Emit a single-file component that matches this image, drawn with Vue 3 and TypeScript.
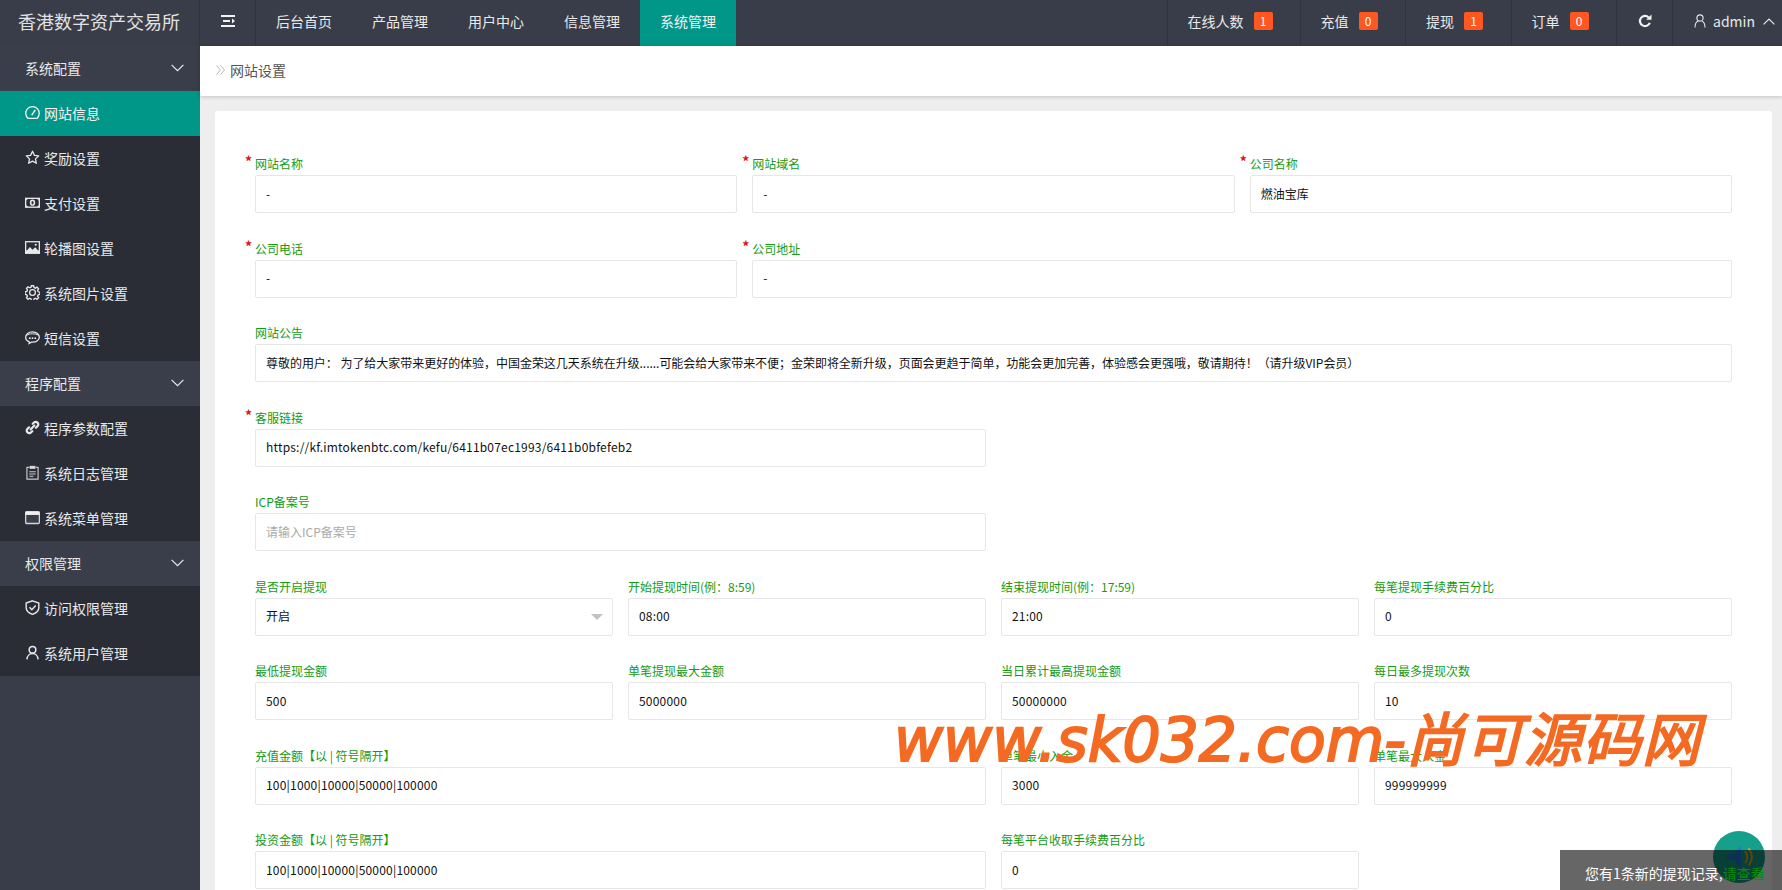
<script setup lang="ts">
interface Field { label: string; value?: string; placeholder?: string; span: number; req?: boolean; select?: boolean }

const navItems = ['后台首页', '产品管理', '用户中心', '信息管理', '系统管理']
const counters = [
  { label: '在线人数', n: 1 },
  { label: '充值', n: 0 },
  { label: '提现', n: 1 },
  { label: '订单', n: 0 },
]

const icons: Record<string, string> = {
  dash: '<path d="M2.900 12.500A6.300 6.300 0 1 1 11.100 12.500Z" fill="none" stroke="currentColor" stroke-width="1.200" stroke-linejoin="round"/><path d="M6.300 9.400 9.600 4.600" fill="none" stroke="currentColor" stroke-width="1.400"/>',
  star: '<path d="M7 1.200 8.800 5l4 .5-3 2.800.8 4.100L7 10.400l-3.600 2 .8-4.100-3-2.800 4-.5Z" fill="none" stroke="currentColor" stroke-width="1.200" stroke-linejoin="round"/>',
  money: '<rect x="0" y="2.500" width="14" height="9.500" fill="currentColor"/><rect x="1.200" y="3.700" width="11.600" height="7.100" rx="2" fill="#2a2d36"/><ellipse cx="7" cy="7.200" rx="2.500" ry="2.900" fill="currentColor"/><ellipse cx="7" cy="7.200" rx="1" ry="1.700" fill="#2a2d36"/>',
  image: '<rect x="0" y="1" width="14" height="12" fill="currentColor"/><rect x="1.200" y="2.200" width="11.600" height="7.600" fill="#2a2d36"/><path d="M1.200 10.500 4.600 6.500l2.400 2.600 2.600-2.400 3.200 3.800v1H1.200Z" fill="currentColor"/><circle cx="10" cy="4.400" r="1" fill="currentColor"/>',
  gear: '<path d="M5.900.8h2.200l.4 1.800 1.300.6 1.600-1 1.500 1.600-1 1.500.6 1.400 1.700.4v2.100l-1.700.4-.6 1.400 1 1.500-1.500 1.500-1.600-1-1.300.6-.4 1.800H5.900l-.4-1.800-1.300-.6-1.600 1-1.500-1.500 1-1.500-.6-1.400-1.700-.4V6.700l1.700-.4.6-1.400-1-1.500 1.500-1.600 1.600 1 1.300-.6Z" fill="none" stroke="currentColor" stroke-width="1.300" transform="translate(.3 -.1) scale(.96)"/><circle cx="7" cy="7" r="2.700" fill="none" stroke="currentColor" stroke-width="1.200"/>',
  chat: '<path d="M7 1.800C3.300 1.800.6 4 .6 6.800c0 2 1.400 3.600 3.400 4.300l-.2 1.500 2.200-1.300h1c3.700 0 6.400-2 6.400-4.500S10.700 1.800 7 1.800Z" fill="none" stroke="currentColor" stroke-width="1.200"/><path d="M1.200 5.200C3 3.800 5 3.600 7 3.600s4 .2 5.800 1.600" fill="none" stroke="currentColor" stroke-width=".9"/><circle cx="4.400" cy="7.600" r=".9" fill="currentColor"/><circle cx="7" cy="7.600" r=".9" fill="currentColor"/><circle cx="9.600" cy="7.600" r=".9" fill="currentColor"/>',
  link: '<g fill="none" stroke="currentColor" stroke-width="2" stroke-linecap="round"><path d="M5.200 8.800 8.800 5.200"/><path d="M7.200 3.600l1.500-1.500a2.400 2.400 0 0 1 3.300 3.300L10.200 7.200"/><path d="M6.800 10.400l-1.500 1.500A2.400 2.400 0 0 1 2 8.600L3.800 6.800"/></g>',
  note: '<path d="M4 2.200H1.800v11h10.400v-11H10" fill="none" stroke="#c9cacd" stroke-width="1.100"/><rect x="4.300" y=".8" width="5.400" height="2.800" fill="#d6d7d9"/><path d="M4 6.300h6M4 8.400h6M4 10.500h4" stroke="#c9cacd" stroke-width="1"/>',
  table: '<rect x=".6" y="1.600" width="12.800" height="11" rx="1" fill="#3b3f49" stroke="#d5d6d9" stroke-width="1.200"/><rect x=".6" y="1.600" width="12.800" height="3" fill="#f0f0f0"/>',
  shield: '<path d="M7 .8 12.900 2.800v4.400c0 2.900-2.400 5-5.900 6.200C3.500 12.200 1.100 10.100 1.100 7.200V2.800Z" fill="none" stroke="currentColor" stroke-width="1.300"/><path d="M4.200 6.700 6.400 9l3.600-3.800" fill="none" stroke="currentColor" stroke-width="1.300"/>',
  user: '<circle cx="7" cy="4.400" r="3.100" fill="none" stroke="currentColor" stroke-width="1.400"/><path d="M1.800 13.400c.2-3 2.400-5.400 5.200-5.400s5 2.400 5.200 5.400" fill="none" stroke="currentColor" stroke-width="1.400"/>',
}

const groups = [
  { title: '系统配置', items: [
    { label: '网站信息', icon: 'dash', active: true },
    { label: '奖励设置', icon: 'star' },
    { label: '支付设置', icon: 'money' },
    { label: '轮播图设置', icon: 'image' },
    { label: '系统图片设置', icon: 'gear' },
    { label: '短信设置', icon: 'chat' },
  ] },
  { title: '程序配置', items: [
    { label: '程序参数配置', icon: 'link' },
    { label: '系统日志管理', icon: 'note' },
    { label: '系统菜单管理', icon: 'table' },
  ] },
  { title: '权限管理', items: [
    { label: '访问权限管理', icon: 'shield' },
    { label: '系统用户管理', icon: 'user' },
  ] },
]

const amounts = '100|1000|10000|50000|100000'
const notice = '尊敬的用户： 为了给大家带来更好的体验，中国金荣这几天系统在升级......可能会给大家带来不便；金荣即将全新升级，页面会更趋于简单，功能会更加完善，体验感会更强哦，敬请期待！（请升级VIP会员）'

const rows: Field[][] = [
  [
    { label: '网站名称', value: '-', span: 4, req: true },
    { label: '网站域名', value: '-', span: 4, req: true },
    { label: '公司名称', value: '燃油宝库', span: 4, req: true },
  ],
  [
    { label: '公司电话', value: '-', span: 4, req: true },
    { label: '公司地址', value: '-', span: 8, req: true },
  ],
  [{ label: '网站公告', value: notice, span: 12 }],
  [{ label: '客服链接', value: 'https://kf.imtokenbtc.com/kefu/6411b07ec1993/6411b0bfefeb2', span: 6, req: true }],
  [{ label: 'ICP备案号', placeholder: '请输入ICP备案号', span: 6 }],
  [
    { label: '是否开启提现', value: '开启', span: 3, select: true },
    { label: '开始提现时间(例：8:59)', value: '08:00', span: 3 },
    { label: '结束提现时间(例：17:59)', value: '21:00', span: 3 },
    { label: '每笔提现手续费百分比', value: '0', span: 3 },
  ],
  [
    { label: '最低提现金额', value: '500', span: 3 },
    { label: '单笔提现最大金额', value: '5000000', span: 3 },
    { label: '当日累计最高提现金额', value: '50000000', span: 3 },
    { label: '每日最多提现次数', value: '10', span: 3 },
  ],
  [
    { label: '充值金额【以 | 符号隔开】', value: amounts, span: 6 },
    { label: '单笔最小入金', value: '3000', span: 3 },
    { label: '单笔最大入金', value: '999999999', span: 3 },
  ],
  [
    { label: '投资金额【以 | 符号隔开】', value: amounts, span: 6 },
    { label: '每笔平台收取手续费百分比', value: '0', span: 3 },
  ],
]

const isLatin = (v?: string) => !!v && /^[\x00-\x7f]+$/.test(v)
</script>

<template>
  <div class="app">
    <header class="topbar">
      <div class="logo">香港数字资产交易所</div>
      <div class="toggle">
        <svg width="14" height="12" viewBox="0 0 14 12"><path d="M0 1h14M0 11h14M2 6h7" stroke="currentColor" stroke-width="2" fill="none"/><path d="M11 3.500 14 6l-3 2.500Z" fill="currentColor"/></svg>
      </div>
      <nav class="nav">
        <a v-for="(n, i) in navItems" :key="n" class="nav-item" :class="{ on: i === navItems.length - 1 }">{{ n }}</a>
      </nav>
      <div class="top-right">
        <div v-for="c in counters" :key="c.label" class="counter">
          <span>{{ c.label }}</span><b class="badge">{{ c.n }}</b>
        </div>
        <div class="refresh">
          <svg width="14" height="14" viewBox="0 0 14 14"><path d="M11.800 8.800A5.100 5.100 0 1 1 10.700 3.400" fill="none" stroke="currentColor" stroke-width="2.200"/><path d="M8.100 5.800h5.400V.4Z" fill="currentColor"/></svg>
        </div>
        <div class="account">
          <svg width="12" height="14" viewBox="0 0 12 14"><circle cx="6" cy="4" r="3.100" fill="none" stroke="currentColor" stroke-width="1.100"/><path d="M1 13.500c0-3 .8-5.600 3.200-6.600M11 13.500c0-3-.8-5.600-3.200-6.600" fill="none" stroke="currentColor" stroke-width="1.100"/></svg>
          <span class="account-name">admin</span>
          <svg width="12" height="7" viewBox="0 0 12 7"><path d="M.6 6.400 6 1l5.400 5.400" fill="none" stroke="currentColor" stroke-width="1.200"/></svg>
        </div>
      </div>
    </header>

    <div class="body">
      <aside class="sidebar">
        <template v-for="g in groups" :key="g.title">
          <div class="group">
            <span>{{ g.title }}</span>
            <svg width="13" height="8" viewBox="0 0 13 8"><path d="M.6.8 6.500 6.700 12.400.8" fill="none" stroke="currentColor" stroke-width="1.200"/></svg>
          </div>
          <div v-for="it in g.items" :key="it.label" class="side-item" :class="{ on: it.active }">
            <svg class="side-icon" width="15" height="15" viewBox="0 0 14 14" v-html="icons[it.icon]"></svg>
            <span>{{ it.label }}</span>
          </div>
        </template>
      </aside>

      <main class="main">
        <div class="crumb">
          <svg width="9" height="10" viewBox="0 0 9 10"><path d="M.5.500 4.500 5l-4 4.500M4.500.500 8.500 5l-4 4.500" fill="none" stroke="#b4b4b4" stroke-width="1"/></svg>
          <span>网站设置</span>
        </div>
        <section class="card">
          <div v-for="(row, r) in rows" :key="r" class="row">
            <div v-for="f in row" :key="f.label" class="field" :class="'span' + f.span">
              <label class="label"><i v-if="f.req" class="star">*</i>{{ f.label }}</label>
              <div class="control">
                <input class="input" :class="{ latin: isLatin(f.value), long: f.span === 12 }" :value="f.value" :placeholder="f.placeholder" readonly />
                <i v-if="f.select" class="caret"></i>
              </div>
            </div>
          </div>
        </section>
      </main>
    </div>

    <div class="watermark">www.sk032.com-<span class="wm-cjk">尚可源码网</span></div>

    <div class="bubble">
      <svg width="30" height="30" viewBox="0 0 30 30">
        <path d="M3 12h6l8-8v22l-8-8H3Z" fill="#1f78d8"/>
        <path d="M21 9c3 3.600 3 8.400 0 12M24.500 6.500c4.500 5 4.500 12 0 17" fill="none" stroke="#f0a020" stroke-width="2"/>
      </svg>
    </div>
    <div class="toast">您有1条新的提现记录,<span class="toast-link">请查看</span></div>
  </div>
</template>

<style>
html, body { margin: 0; height: 100%; overflow: hidden; background: #eee; }
</style>

<style scoped>
.app {
  height: 890px;
  overflow: hidden;
  position: relative;
  display: flex;
  flex-direction: column;
  font-family: "Noto Sans CJK SC", "Noto Sans", sans-serif;
  font-size: 14px;
  color: #333;
}
.topbar {
  height: 46px;
  flex: none;
  display: flex;
  background: #393d49;
  color: #e9e9e9;
}
.logo {
  width: 200px;
  flex: none;
  box-sizing: border-box;
  padding: 0 0 5px 18px;
  display: flex;
  align-items: center;
  font-size: 18px;
  color: #e2e2e2;
  border-right: 1px solid #31343f;
  white-space: nowrap;
}
.toggle {
  width: 56px;
  flex: none;
  box-sizing: border-box;
  padding-bottom: 4px;
  display: flex;
  align-items: center;
  justify-content: center;
  border-right: 1px solid #31343f;
  color: #f2f2f2;
}
.nav { display: flex; }
.nav-item {
  width: 96px;
  box-sizing: border-box;
  padding-bottom: 4px;
  display: flex;
  align-items: center;
  justify-content: center;
  color: #e9e9e9;
}
.nav-item.on { background: #009688; color: #f4f4f4; }
.top-right { margin-left: auto; display: flex; }
.counter, .refresh, .account {
  display: flex;
  align-items: center;
  box-sizing: border-box;
  padding-bottom: 4px;
  border-left: 1px solid #31343f;
}
.counter { width: 105.500px; padding-left: 20px; gap: 10px; white-space: nowrap; }
.counter:first-child { width: 133px; }
.badge {
  width: 19px;
  height: 18px;
  border-radius: 2px;
  background: #ff5722;
  color: #fff;
  font-size: 12px;
  font-weight: 400;
  line-height: 18px;
  text-align: center;
}
.refresh { width: 56px; justify-content: center; color: #f2f2f2; }
.account { width: 110px; padding-left: 21px; color: #e9e9e9; }
.account-name { margin: 0 8px 0 7px; line-height: 1; }
.body { flex: 1; min-height: 0; display: flex; }
.sidebar {
  width: 200px;
  flex: none;
  background: #393d49;
  color: #e9e9e9;
}
.group {
  height: 45px;
  box-sizing: border-box;
  padding: 0 16px 2px 25px;
  display: flex;
  align-items: center;
  justify-content: space-between;
  background: #3a3e4a;
}
.side-item {
  height: 45px;
  box-sizing: border-box;
  padding: 0 0 2px 25px;
  display: flex;
  align-items: center;
  gap: 4px;
  background: #2a2d36;
}
.side-item.on { background: #009688; color: #f4f4f4; }
.side-icon { flex: none; }
.main { flex: 1; min-width: 0; display: flex; flex-direction: column; }
.crumb {
  height: 50px;
  flex: none;
  box-sizing: border-box;
  padding: 0 0 2px 16px;
  display: flex;
  align-items: center;
  gap: 5px;
  background: #fff;
  color: #555;
  box-shadow: 0 1px 4px rgba(0, 0, 0, .18);
  position: relative;
}
.card {
  margin: 15px 10px 0 15px;
  padding: 42px 40px 0;
  background: #fff;
  flex: 1;
  border-radius: 3px 3px 0 0;
}
.row {
  display: grid;
  grid-template-columns: repeat(12, 1fr);
  column-gap: 15px;
  margin-bottom: 24.500px;
}
.span3 { grid-column: span 3; }
.span4 { grid-column: span 4; }
.span6 { grid-column: span 6; }
.span8 { grid-column: span 8; }
.span12 { grid-column: span 12; }
.field { min-width: 0; }
.label {
  display: block;
  box-sizing: border-box;
  height: 20px;
  padding-top: 1px;
  margin-bottom: 2px;
  font-size: 12px;
  line-height: 20px;
  color: #159a15;
  white-space: nowrap;
}
.star {
  display: inline-block;
  width: 9px;
  margin-left: -10px;
  margin-right: 1px;
  color: #e01010;
  font-style: normal;
  font-size: 14px;
  font-weight: 700;
  line-height: 10px;
  vertical-align: 2px;
}
.control { position: relative; }
.input {
  display: block;
  width: 100%;
  height: 38px;
  box-sizing: border-box;
  padding: 0 10px 2px;
  border: 1px solid #e6e6e6;
  border-radius: 2px;
  outline: none;
  background: #fff;
  font: inherit;
  font-size: 12px;
  color: #111;
}
.input.latin { letter-spacing: .2px; }
.input.long { letter-spacing: -.035px; }
.input::placeholder { color: #aaa; }
.caret {
  position: absolute;
  right: 10px;
  top: 16px;
  border: 6px solid transparent;
  border-top-color: #c2c2c2;
  border-bottom: 0;
}
.watermark {
  position: absolute;
  left: 894px;
  top: 694px;
  font-family: "DejaVu Sans", "Noto Sans CJK SC", sans-serif;
  font-size: 60px;
  font-style: italic;
  line-height: 84px;
  color: #f56a22;
  -webkit-text-stroke: 2px #f56a22;
  white-space: nowrap;
  pointer-events: none;
}
.wm-cjk { font-family: "Noto Sans CJK SC", sans-serif; font-size: 58px; letter-spacing: 1px; }
.bubble {
  position: absolute;
  left: 1713px;
  top: 831px;
  width: 52px;
  height: 52px;
  border-radius: 50%;
  background: #16a08c;
  display: flex;
  align-items: center;
  justify-content: center;
}
.toast {
  position: absolute;
  left: 1560px;
  right: 0;
  top: 850px;
  height: 40px;
  box-sizing: border-box;
  padding: 12px 0 0 25px;
  background: rgba(0, 0, 0, .6);
  color: #fff;
  font-size: 14px;
  line-height: 22px;
  white-space: nowrap;
}
.toast-link { color: #0a8a0a; }
</style>
